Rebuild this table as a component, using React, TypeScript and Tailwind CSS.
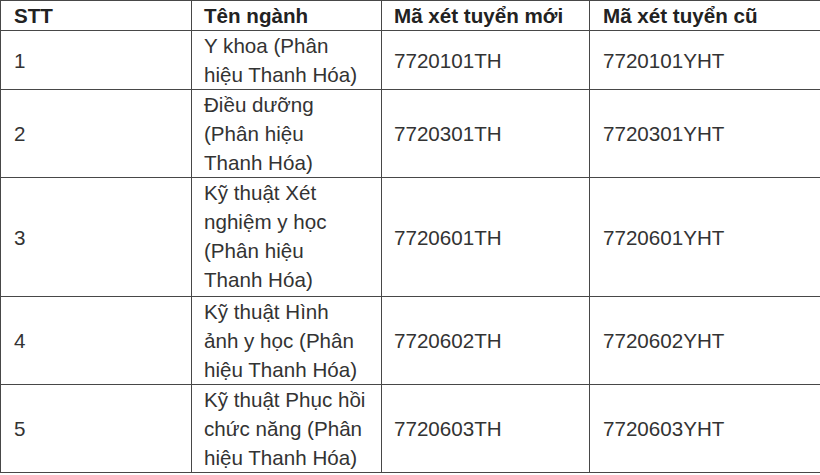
import React from "react";

type Row = { stt: string; name: string[]; moi: string; cu: string; extra?: boolean };

const rows: Row[] = [
  { stt: "1", name: ["Y khoa (Phân", "hiệu Thanh Hóa)"], moi: "7720101TH", cu: "7720101YHT" },
  { stt: "2", name: ["Điều dưỡng", "(Phân hiệu", "Thanh Hóa)"], moi: "7720301TH", cu: "7720301YHT" },
  { stt: "3", name: ["Kỹ thuật Xét", "nghiệm y học", "(Phân hiệu", "Thanh Hóa)"], moi: "7720601TH", cu: "7720601YHT", extra: true },
  { stt: "4", name: ["Kỹ thuật Hình", "ảnh y học (Phân", "hiệu Thanh Hóa)"], moi: "7720602TH", cu: "7720602YHT" },
  { stt: "5", name: ["Kỹ thuật Phục hồi", "chức năng (Phân", "hiệu Thanh Hóa)"], moi: "7720603TH", cu: "7720603YHT" },
];

export default function App() {
  return (
    <div className="w-[820px] h-[475px] overflow-hidden bg-white">
      <table
        className="table-fixed border-collapse w-[840px] text-[20.6px] leading-[29px] text-[#333333]"
        style={{ fontFamily: '"Liberation Sans", Arial, sans-serif' }}
      >
        <colgroup>
          <col className="w-[191px]" />
          <col className="w-[190px]" />
          <col className="w-[208px]" />
          <col className="w-[251px]" />
        </colgroup>
        <thead>
          <tr>
            <th className="border border-[#474747] pl-[13px] pr-2 py-0 text-left align-middle font-bold text-[#222222]">STT</th>
            <th className="border border-[#474747] pl-[12px] pr-2 py-0 text-left align-middle font-bold text-[#222222]">Tên ngành</th>
            <th className="border border-[#474747] pl-[12px] pr-2 py-0 text-left align-middle font-bold text-[#222222]">Mã xét tuyển mới</th>
            <th className="border border-[#474747] pl-[13px] pr-2 py-0 text-left align-middle font-bold text-[#222222]">Mã xét tuyển cũ</th>
          </tr>
        </thead>
        <tbody>
          {rows.map((r) => (
            <tr key={r.stt}>
              <td className="border border-[#474747] pl-[13px] pr-2 py-0 align-middle">{r.stt}</td>
              <td className={r.extra ? "border border-[#474747] pl-[12px] pr-1 pt-0 pb-[2px] align-top whitespace-nowrap" : "border border-[#474747] pl-[12px] pr-1 py-0 align-top whitespace-nowrap"}>
                {r.name.map((l, i) => (
                  <div key={i}>{l}</div>
                ))}
              </td>
              <td className="border border-[#474747] pl-[12px] pr-2 py-0 align-middle">{r.moi}</td>
              <td className="border border-[#474747] pl-[13px] pr-2 py-0 align-middle">{r.cu}</td>
            </tr>
          ))}
        </tbody>
      </table>
    </div>
  );
}
